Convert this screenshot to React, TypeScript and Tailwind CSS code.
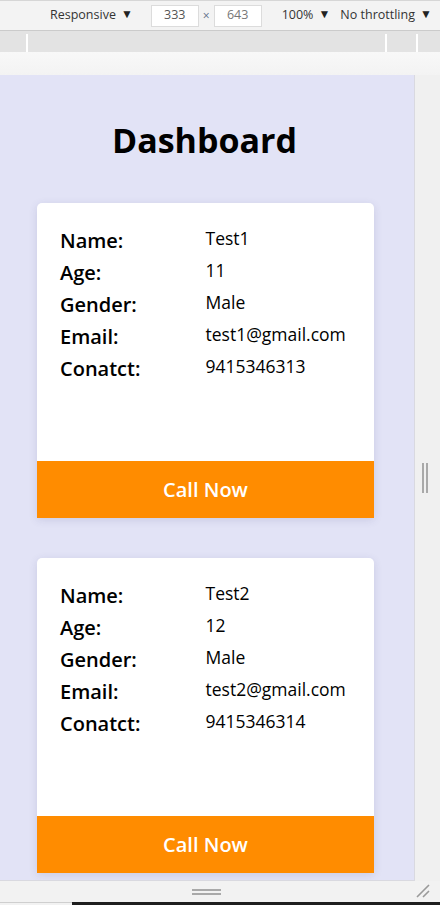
import React from 'react'

type Person = {
  name: string
  age: number
  gender: string
  email: string
  contact: string
}

const people: Person[] = [
  { name: 'Test1', age: 11, gender: 'Male', email: 'test1@gmail.com', contact: '9415346313' },
  { name: 'Test2', age: 12, gender: 'Male', email: 'test2@gmail.com', contact: '9415346314' },
]

const Caret = () => <span className="ml-[5px] -mt-[3px] text-[12px] leading-none text-[#222]">▼</span>

const Toolbar = () => (
  <div className="h-[31px] flex items-center bg-[#f3f3f3] border-t border-[#d6d6d6] border-b border-b-[#cbcbcb] text-[12.5px] text-[#333] font-['Open_Sans',sans-serif]">
    <div className="ml-[50px] flex items-center">
      Responsive
      <Caret />
    </div>
    <div className="ml-[18px] w-[48px] h-[22px] bg-white border border-[#dcdcdc] flex items-center justify-center text-[#555]">
      333
    </div>
    <span className="mx-[4px] text-[#5b6e87] text-[12px]">×</span>
    <div className="w-[48px] h-[22px] bg-white border border-[#dcdcdc] flex items-center justify-center text-[#777]">
      643
    </div>
    <div className="ml-[20px] flex items-center">
      100%
      <Caret />
    </div>
    <div className="ml-[10px] flex items-center whitespace-nowrap">
      No throttling
      <Caret />
    </div>
  </div>
)

const Ruler = () => (
  <div className="h-[21px] bg-[#e3e3e3] flex items-end">
    <div className="ml-[26px] w-[2px] h-[18px] bg-white" />
    <div className="ml-[357px] w-[2px] h-[18px] bg-white" />
    <div className="ml-[29px] w-[2px] h-[18px] bg-white" />
  </div>
)

const Row = ({ label }: { label: string }) => <div>{label}</div>

const PersonCard = ({ person }: { person: Person }) => (
  <div className="w-[337px] bg-white rounded-t-[5px] shadow-[0_2px_8px_rgba(60,60,120,0.14)]">
    <div className="h-[258px] flex px-[23px]">
      <div className="w-1/2 pt-[22px] text-[20px] leading-[32px] font-semibold text-black">
        <Row label="Name:" />
        <Row label="Age:" />
        <Row label="Gender:" />
        <Row label="Email:" />
        <Row label="Conatct:" />
      </div>
      <div className="w-1/2 pt-[19px] text-[17.5px] leading-[32px] text-black">
        <div>{person.name}</div>
        <div>{person.age}</div>
        <div>{person.gender}</div>
        <div>{person.email}</div>
        <div>{person.contact}</div>
      </div>
    </div>
    <button className="w-full h-[57px] bg-[#ff8c00] text-white text-[20px] font-semibold leading-[55px]">
      Call Now
    </button>
  </div>
)

export default function App() {
  return (
    <div className="w-[440px] h-[905px] flex flex-col bg-[#f4f4f4] overflow-hidden font-['Open_Sans',sans-serif]">
      <Toolbar />
      <Ruler />
      <div className="h-[23px] bg-gradient-to-b from-[#f8f8f8] to-[#f3f3f3]" />
      <div className="h-[806px] flex">
        <div className="w-[415px] h-full bg-[#e2e3f6] border-r border-b border-[#d9d9e0] overflow-hidden">
          <h1 className="pt-[45px] text-center text-[34px] leading-[40px] font-bold text-black pr-[5px]">
            Dashboard
          </h1>
          <div className="mt-[43px] pl-[37px] flex flex-col gap-[40px]">
            {people.map(p => (
              <PersonCard key={p.email} person={p} />
            ))}
          </div>
        </div>
        <div className="flex-1 bg-[#f0f0f0] flex items-center pl-[7px]">
          <div className="flex gap-[2px]">
            <div className="w-[2px] h-[30px] bg-[#a9a9a9]" />
            <div className="w-[2px] h-[30px] bg-[#a9a9a9]" />
          </div>
        </div>
      </div>
      <div className="h-[21px] bg-[#f2f2f2] relative flex justify-center">
        <div className="mt-[8px] mr-[28px] flex flex-col gap-[2px]">
          <div className="w-[29px] h-[2px] bg-[#a9a9a9]" />
          <div className="w-[29px] h-[2px] bg-[#a9a9a9]" />
        </div>
        <svg className="absolute right-[10px] top-[3px]" width="14" height="14" viewBox="0 0 14 14">
          <path d="M1 13 L13 1 M7 13 L13 7" stroke="#9a9a9a" strokeWidth="1.6" />
        </svg>
      </div>
      <div className="flex-1 flex">
        <div className="w-[72px] bg-[#f2f2f2] border-t border-[#cfcfcf]" />
        <div className="flex-1 bg-[#1e1e1e]" />
      </div>
    </div>
  )
}
